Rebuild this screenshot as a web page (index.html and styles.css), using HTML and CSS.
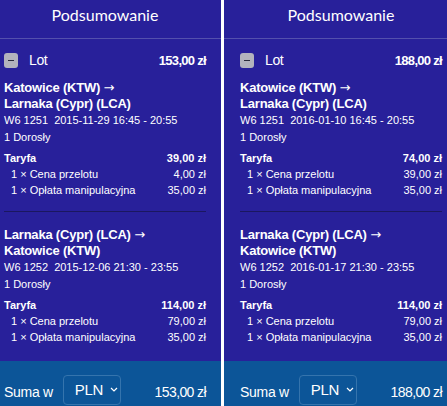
FILE: index.html
```html
<!DOCTYPE html>
<html lang="pl">
<head>
  <meta charset="UTF-8">
  <meta name="viewport" content="width=device-width, initial-scale=1.0">
  <title>Podsumowanie</title>
  <link rel="stylesheet" href="styles.css">
</head>
<body>
  <div class="panele">

    <div class="panel panel-lewy">
      <div class="naglowek"><h2>Podsumowanie</h2></div>
      <div class="tresc">
        <div class="lot">
          <span class="zwin"></span>
          <span class="lot-nazwa">Lot</span>
          <strong class="lot-cena">153,00 zł</strong>
        </div>

        <div class="odcinek">
          <div class="trasa">Katowice (KTW) <span class="strzalka">→</span><br>Larnaka (Cypr) (LCA)</div>
          <div class="rejs">W6 1251&nbsp; 2015-11-29 16:45 - 20:55</div>
          <div class="pasazer">1 Dorosły</div>
          <div class="oplaty">
            <div class="wiersz suma-taryfy"><span>Taryfa</span><span>39,00 zł</span></div>
            <div class="wiersz pozycja"><span>1 × Cena przelotu</span><span>4,00 zł</span></div>
            <div class="wiersz pozycja"><span>1 × Opłata manipulacyjna</span><span>35,00 zł</span></div>
          </div>
        </div>

        <hr class="kreska">

        <div class="odcinek odcinek-powrot">
          <div class="trasa">Larnaka (Cypr) (LCA) <span class="strzalka">→</span><br>Katowice (KTW)</div>
          <div class="rejs">W6 1252&nbsp; 2015-12-06 21:30 - 23:55</div>
          <div class="pasazer">1 Dorosły</div>
          <div class="oplaty">
            <div class="wiersz suma-taryfy"><span>Taryfa</span><span>114,00 zł</span></div>
            <div class="wiersz pozycja"><span>1 × Cena przelotu</span><span>79,00 zł</span></div>
            <div class="wiersz pozycja"><span>1 × Opłata manipulacyjna</span><span>35,00 zł</span></div>
          </div>
        </div>
      </div>
      <div class="stopka">
        <span class="suma-w">Suma w</span>
        <div class="waluta">PLN
          <svg width="8" height="5" viewBox="0 0 8 5"><path d="M1 1 L4 4 L7 1" fill="none" stroke="#fff" stroke-width="1.2"/></svg>
        </div>
        <span class="suma">153,00 zł</span>
      </div>
    </div>

    <div class="panel panel-prawy">
      <div class="naglowek"><h2>Podsumowanie</h2></div>
      <div class="tresc">
        <div class="lot">
          <span class="zwin"></span>
          <span class="lot-nazwa">Lot</span>
          <strong class="lot-cena">188,00 zł</strong>
        </div>

        <div class="odcinek">
          <div class="trasa">Katowice (KTW) <span class="strzalka">→</span><br>Larnaka (Cypr) (LCA)</div>
          <div class="rejs">W6 1251&nbsp; 2016-01-10 16:45 - 20:55</div>
          <div class="pasazer">1 Dorosły</div>
          <div class="oplaty">
            <div class="wiersz suma-taryfy"><span>Taryfa</span><span>74,00 zł</span></div>
            <div class="wiersz pozycja"><span>1 × Cena przelotu</span><span>39,00 zł</span></div>
            <div class="wiersz pozycja"><span>1 × Opłata manipulacyjna</span><span>35,00 zł</span></div>
          </div>
        </div>

        <hr class="kreska">

        <div class="odcinek odcinek-powrot">
          <div class="trasa">Larnaka (Cypr) (LCA) <span class="strzalka">→</span><br>Katowice (KTW)</div>
          <div class="rejs">W6 1252&nbsp; 2016-01-17 21:30 - 23:55</div>
          <div class="pasazer">1 Dorosły</div>
          <div class="oplaty">
            <div class="wiersz suma-taryfy"><span>Taryfa</span><span>114,00 zł</span></div>
            <div class="wiersz pozycja"><span>1 × Cena przelotu</span><span>79,00 zł</span></div>
            <div class="wiersz pozycja"><span>1 × Opłata manipulacyjna</span><span>35,00 zł</span></div>
          </div>
        </div>
      </div>
      <div class="stopka">
        <span class="suma-w">Suma w</span>
        <div class="waluta">PLN
          <svg width="8" height="5" viewBox="0 0 8 5"><path d="M1 1 L4 4 L7 1" fill="none" stroke="#fff" stroke-width="1.2"/></svg>
        </div>
        <span class="suma">188,00 zł</span>
      </div>
    </div>

  </div>
</body>
</html>
```

FILE: styles.css
```css
 body {
   margin: 0;
   background: #fff;
   font-family: "Liberation Sans", Arial, sans-serif;
   color: #fff;
 }

 .panele {
   display: grid;
   grid-template-columns: 221px 223px;
   column-gap: 3px;
   height: 406px;
   overflow: hidden;
 }

 .panel {
   background: #28209a;
   display: flex;
   flex-direction: column;
 }

 /* przesuniecie tresci w obu kolumnach */
 .panel-lewy .naglowek h2,
 .panel-lewy .tresc,
 .panel-lewy .stopka {
   padding-left: 4px;
   padding-right: 15px;
 }
 .panel-prawy .naglowek h2,
 .panel-prawy .tresc,
 .panel-prawy .stopka {
   padding-left: 16px;
   padding-right: 5px;
 }

 .naglowek {
   height: 38px;
   border-bottom: 1px solid #5450ad;
 }
 .naglowek h2 {
   margin: 0;
   font-family: Lato, "Noto Sans", sans-serif;
   font-weight: normal;
   font-size: 16px;
   line-height: 30px;
   text-align: center;
 }

 .lot {
   display: flex;
   align-items: center;
   height: 16px;
   margin-top: 13px;
 }
 .zwin {
   width: 14px;
   height: 15px;
   border-radius: 3px;
   background: #b3b3bd;
   position: relative;
 }
 .zwin::after {
   content: "";
   position: absolute;
   left: 4px;
   top: 7px;
   width: 6px;
   height: 1.5px;
   background: #2a2a3a;
 }
 .lot-nazwa {
   margin-left: 11px;
   font-size: 14px;
   letter-spacing: -0.4px;
 }
 .lot-cena {
   margin-left: auto;
   font-size: 13px;
   letter-spacing: -0.7px;
 }

 .trasa {
   margin-top: 12px;
   font-size: 13px;
   font-weight: bold;
   line-height: 16px;
   letter-spacing: -0.2px;
 }
 .strzalka {
   font-family: "DejaVu Sans", sans-serif;
   font-weight: normal;
   letter-spacing: 0;
 }
 .rejs {
   font-size: 11px;
   line-height: 16px;
 }
 .pasazer {
   margin-top: 1px;
   font-size: 11px;
   line-height: 16px;
 }

 .oplaty {
   margin-top: 5px;
 }
 .wiersz {
   display: flex;
   justify-content: space-between;
   font-size: 11px;
   line-height: 16px;
 }
 .suma-taryfy {
   font-weight: bold;
 }
 .pozycja {
   padding-left: 7px;
 }
 .pozycja:last-child {
   line-height: 17px;
 }

 .kreska {
   border: none;
   height: 1px;
   background: #1b1760;
   margin: 12px 0 0;
 }
 .odcinek-powrot .trasa {
   margin-top: 15px;
 }

 .stopka {
   margin-top: auto;
   height: 45px;
   background: #0c5598;
   display: flex;
   align-items: center;
   padding-top: 12px;
   box-sizing: border-box;
   font-size: 14px;
 }
 .stopka .suma-w {
   letter-spacing: -0.3px;
   margin-top: 5px;
 }
 .waluta {
   margin-left: 10px;
   height: 30px;
   width: 58px;
   box-sizing: border-box;
   border: 1px solid #3574ad;
   border-radius: 4px;
   display: flex;
   align-items: center;
   gap: 7px;
   padding-left: 11px;
   letter-spacing: -0.3px;
   font-size: 15px;
 }
 .suma {
   margin-left: auto;
   margin-top: 5px;
   letter-spacing: -0.6px;
 }
```
